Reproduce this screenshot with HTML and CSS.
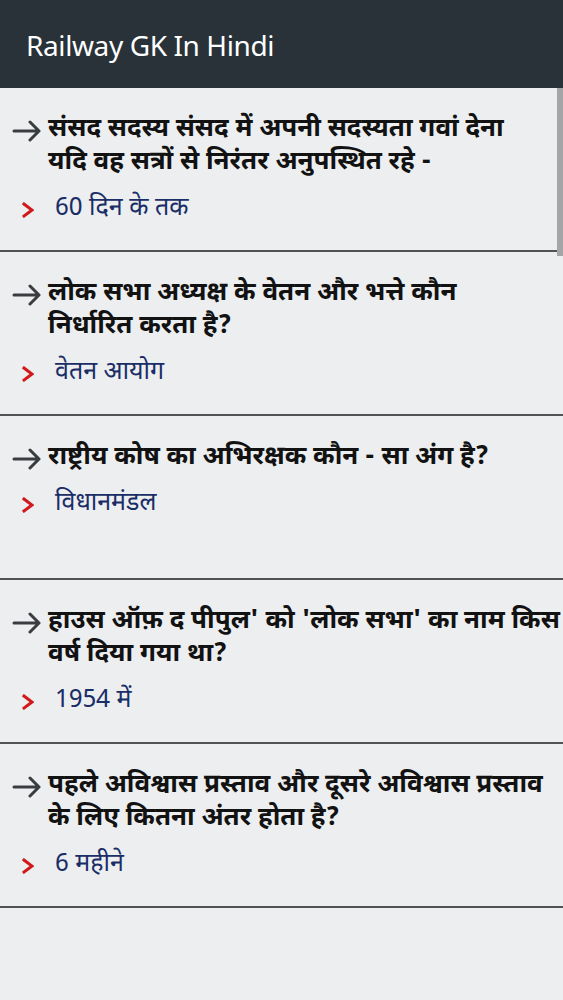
FILE: index.html
```html
<!DOCTYPE html>
<html lang="hi">
<head>
<meta charset="utf-8">
<title>Railway GK In Hindi</title>
<link rel="stylesheet" href="styles.css">
</head>
<body>
<header class="appbar">
  <h1 class="title">Railway GK In Hindi</h1>
</header>
<main class="list">
  <div class="scrollbar"></div>
  <section class="item">
    <div class="question">
      <svg class="arrow" viewBox="0 0 30 22" width="30" height="22"><path d="M2 11 H27 M18 2 L27 11 L18 20" fill="none" stroke="#3a3d40" stroke-width="3" stroke-linecap="round" stroke-linejoin="round"/></svg>
      <p class="qtext">संसद सदस्य संसद में अपनी सदस्यता गवां देना<br>यदि वह सत्रों से निरंतर अनुपस्थित रहे -</p>
    </div>
    <div class="answer">
      <svg class="chev" viewBox="0 0 12 16" width="12" height="16"><path d="M2 2 L10 8 L2 14" fill="none" stroke="#d1191c" stroke-width="3" stroke-linecap="square"/></svg>
      <span class="atext">60 दिन के तक</span>
    </div>
  </section>
  <section class="item">
    <div class="question">
      <svg class="arrow" viewBox="0 0 30 22" width="30" height="22"><path d="M2 11 H27 M18 2 L27 11 L18 20" fill="none" stroke="#3a3d40" stroke-width="3" stroke-linecap="round" stroke-linejoin="round"/></svg>
      <p class="qtext">लोक सभा अध्यक्ष के वेतन और भत्ते कौन<br>निर्धारित करता है?</p>
    </div>
    <div class="answer">
      <svg class="chev" viewBox="0 0 12 16" width="12" height="16"><path d="M2 2 L10 8 L2 14" fill="none" stroke="#d1191c" stroke-width="3" stroke-linecap="square"/></svg>
      <span class="atext">वेतन आयोग</span>
    </div>
  </section>
  <section class="item">
    <div class="question">
      <svg class="arrow" viewBox="0 0 30 22" width="30" height="22"><path d="M2 11 H27 M18 2 L27 11 L18 20" fill="none" stroke="#3a3d40" stroke-width="3" stroke-linecap="round" stroke-linejoin="round"/></svg>
      <p class="qtext">राष्ट्रीय कोष का अभिरक्षक कौन - सा अंग है?</p>
    </div>
    <div class="answer">
      <svg class="chev" viewBox="0 0 12 16" width="12" height="16"><path d="M2 2 L10 8 L2 14" fill="none" stroke="#d1191c" stroke-width="3" stroke-linecap="square"/></svg>
      <span class="atext">विधानमंडल</span>
    </div>
  </section>
  <section class="item">
    <div class="question">
      <svg class="arrow" viewBox="0 0 30 22" width="30" height="22"><path d="M2 11 H27 M18 2 L27 11 L18 20" fill="none" stroke="#3a3d40" stroke-width="3" stroke-linecap="round" stroke-linejoin="round"/></svg>
      <p class="qtext">हाउस ऑफ़ द पीपुल' को 'लोक सभा' का नाम किस<br>वर्ष दिया गया था?</p>
    </div>
    <div class="answer">
      <svg class="chev" viewBox="0 0 12 16" width="12" height="16"><path d="M2 2 L10 8 L2 14" fill="none" stroke="#d1191c" stroke-width="3" stroke-linecap="square"/></svg>
      <span class="atext">1954 में</span>
    </div>
  </section>
  <section class="item">
    <div class="question">
      <svg class="arrow" viewBox="0 0 30 22" width="30" height="22"><path d="M2 11 H27 M18 2 L27 11 L18 20" fill="none" stroke="#3a3d40" stroke-width="3" stroke-linecap="round" stroke-linejoin="round"/></svg>
      <p class="qtext">पहले अविश्वास प्रस्ताव और दूसरे अविश्वास प्रस्ताव<br>के लिए कितना अंतर होता है?</p>
    </div>
    <div class="answer">
      <svg class="chev" viewBox="0 0 12 16" width="12" height="16"><path d="M2 2 L10 8 L2 14" fill="none" stroke="#d1191c" stroke-width="3" stroke-linecap="square"/></svg>
      <span class="atext">6 महीने</span>
    </div>
  </section>
</main>
</body>
</html>
```

FILE: styles.css
```css
html, body {
  margin: 0;
  padding: 0;
}
body {
  width: 563px;
  height: 1000px;
  overflow: hidden;
  background: #eceef0;
  font-family: "Noto Sans Devanagari", "Lohit Devanagari", "Noto Sans", "DejaVu Sans", sans-serif;
}
.appbar {
  height: 88px;
  background: #283238;
  display: flex;
  align-items: center;
  padding-left: 26px;
  box-sizing: border-box;
}
.title {
  margin: 0;
  color: #ffffff;
  font-family: "Noto Sans", sans-serif;
  font-weight: 400;
  font-size: 28px;
  letter-spacing: -0.4px;
  padding-top: 2px;
}
.list {
  position: relative;
}
.scrollbar {
  position: absolute;
  right: 0;
  top: 0;
  width: 6px;
  height: 168px;
  background: #a3a5a7;
}
.item {
  height: 162px;
  border-bottom: 2px solid #4f5356;
  box-sizing: content-box;
  padding: 0;
}
.question {
  display: flex;
  align-items: flex-start;
  padding: 26px 0 0 12px;
}
.arrow {
  flex: none;
  margin-top: 6px;
  margin-right: 6px;
}
.qtext {
  margin: 0;
  font-size: 26px;
  font-weight: 700;
  line-height: 33px;
  color: #121212;
  white-space: nowrap;
}
.answer {
  display: flex;
  align-items: center;
  padding-left: 22px;
  margin-top: 13px;
  height: 33px;
}
.chev {
  flex: none;
  margin-right: 21px;
}
.atext {
  font-size: 25px;
  line-height: 33px;
  color: #1a2d66;
}
```
